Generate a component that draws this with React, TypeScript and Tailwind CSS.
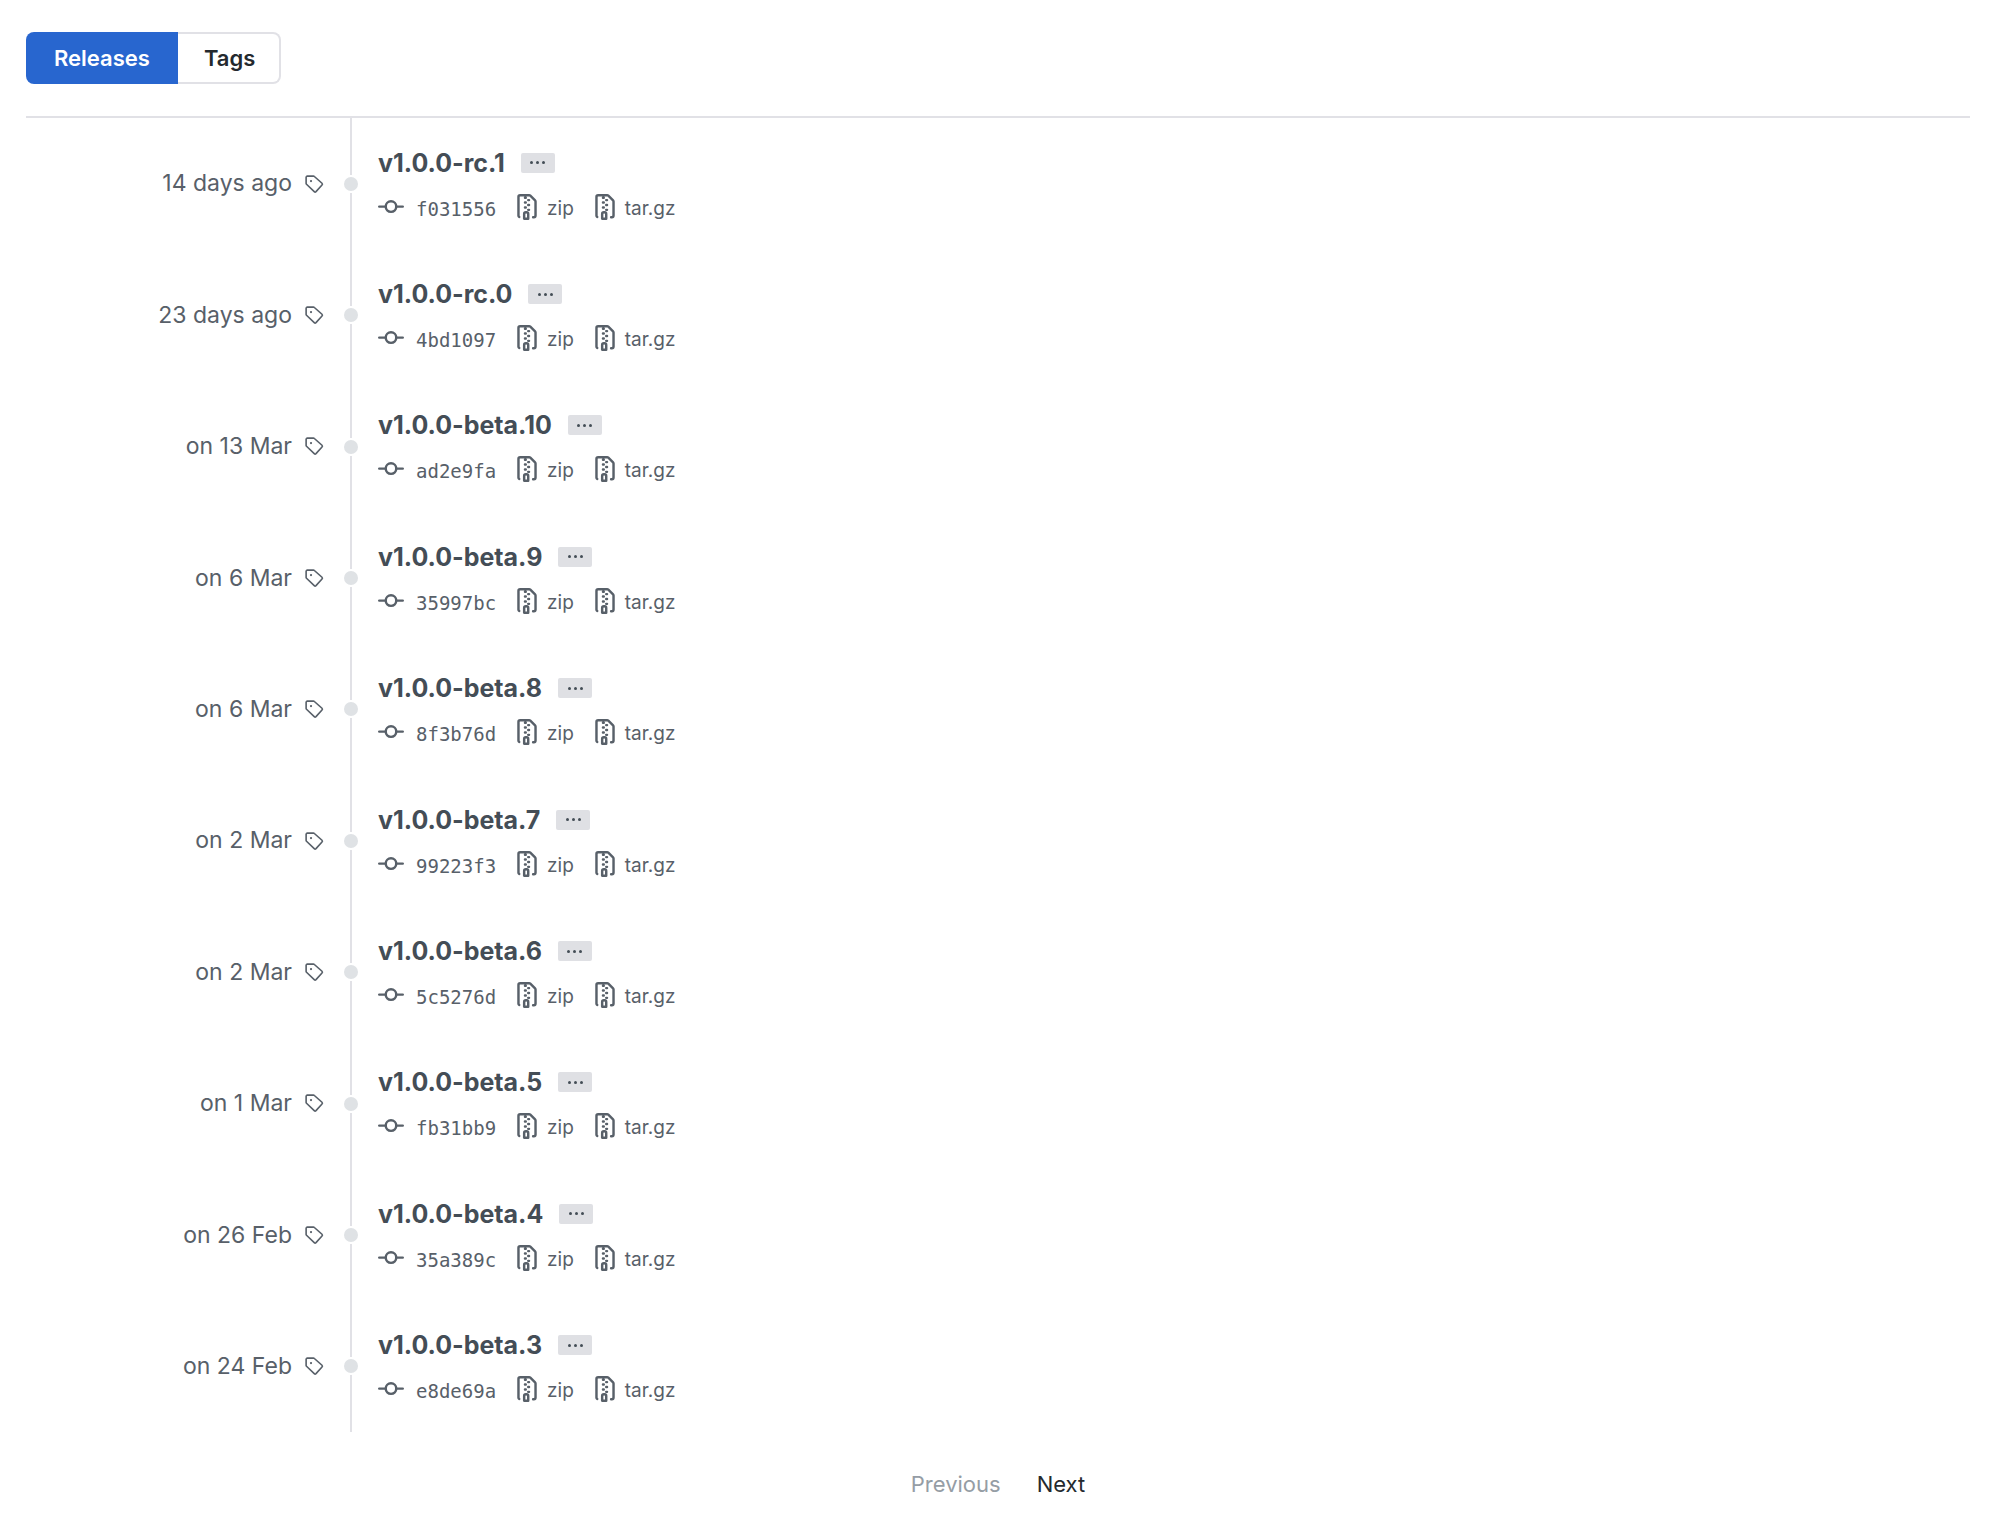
type Release = {
  version: string;
  date: string;
  commit: string;
};

const releases: Release[] = [
  { version: "v1.0.0-rc.1", date: "14 days ago", commit: "f031556" },
  { version: "v1.0.0-rc.0", date: "23 days ago", commit: "4bd1097" },
  { version: "v1.0.0-beta.10", date: "on 13 Mar", commit: "ad2e9fa" },
  { version: "v1.0.0-beta.9", date: "on 6 Mar", commit: "35997bc" },
  { version: "v1.0.0-beta.8", date: "on 6 Mar", commit: "8f3b76d" },
  { version: "v1.0.0-beta.7", date: "on 2 Mar", commit: "99223f3" },
  { version: "v1.0.0-beta.6", date: "on 2 Mar", commit: "5c5276d" },
  { version: "v1.0.0-beta.5", date: "on 1 Mar", commit: "fb31bb9" },
  { version: "v1.0.0-beta.4", date: "on 26 Feb", commit: "35a389c" },
  { version: "v1.0.0-beta.3", date: "on 24 Feb", commit: "e8de69a" },
];

const TagIcon = () => (
  <svg viewBox="0 0 16 16" fill="none" stroke="currentColor" strokeWidth="1.3" className="h-5 w-5 shrink-0" aria-hidden="true">
    <path d="M1.7 2.6a.9.9 0 0 1 .9-.9h5a1 1 0 0 1 .7.3l6.1 5.4a1 1 0 0 1 0 1.4L9.6 14.1a1 1 0 0 1-1.4 0L2 8.2a1 1 0 0 1-.3-.7z" />
    <circle cx="5.6" cy="5.6" r="0.9" fill="currentColor" stroke="none" />
  </svg>
);

const CommitIcon = () => (
  <svg viewBox="0 0 16 16" fill="none" stroke="currentColor" strokeWidth="1.5" strokeLinecap="round" className="h-[26px] w-[26px] shrink-0" aria-hidden="true">
    <circle cx="8" cy="7.75" r="3.25" />
    <path d="M.75 7.75h4M11.25 7.75h4" />
  </svg>
);

const ZipIcon = () => (
  <svg viewBox="0 0 16 16" fill="currentColor" fillRule="evenodd" className="h-[26px] w-[26px] shrink-0" aria-hidden="true">
    <path d="M3.5 1.75a.25.25 0 01.25-.25h3a.75.75 0 000 1.5h.5a.75.75 0 000-1.5h2.086a.25.25 0 01.177.073l2.914 2.914a.25.25 0 01.073.177v8.586a.25.25 0 01-.25.25h-.5a.75.75 0 000 1.5h.5A1.75 1.75 0 0014 13.25V4.664c0-.464-.184-.909-.513-1.237L10.573.513A1.75 1.75 0 009.336 0H3.75A1.75 1.75 0 002 1.75v11.5c0 .649.353 1.214.874 1.515a.75.75 0 10.752-1.298.25.25 0 01-.126-.217V1.75zM8.75 3a.75.75 0 000 1.5h.5a.75.75 0 000-1.5h-.5zM6 5.25a.75.75 0 01.75-.75h.5a.75.75 0 010 1.5h-.5A.75.75 0 016 5.25zm2 1.5A.75.75 0 018.75 6h.5a.75.75 0 010 1.5h-.5A.75.75 0 018 6.75zm-1.25.75a.75.75 0 000 1.5h.5a.75.75 0 000-1.5h-.5zM8 9.75A.75.75 0 018.75 9h.5a.75.75 0 010 1.5h-.5A.75.75 0 018 9.75zm-.75.75a1.75 1.75 0 00-1.75 1.75v3c0 .414.336.75.75.75h2.5a.75.75 0 00.75-.75v-3a1.75 1.75 0 00-1.75-1.75h-.5zM7 12.25a.25.25 0 01.25-.25h.5a.25.25 0 01.25.25v2.25H7v-2.25z" />
  </svg>
);

const ReleaseRow = ({ version, date, commit }: Release) => (
  <li className="flex">
    <div className="flex w-[298px] shrink-0 items-center justify-end gap-3 text-[23px] text-[#586069]">
      <span>{date}</span>
      <TagIcon />
    </div>

    {/* timeline */}
    <div className="ml-5 flex w-[14px] shrink-0 flex-col items-center">
      <span className="w-0.5 flex-1 bg-[#e1e1e6]" />
      <span className="my-0.5 h-[14px] w-[14px] rounded-full bg-[#dfe2e5]" />
      <span className="w-0.5 flex-1 bg-[#e1e1e6]" />
    </div>

    <div className="ml-5 flex flex-col justify-center gap-2 pt-0.5 text-[#586069]">
      <div className="flex items-center gap-4">
        <h2 className="text-[25px] leading-9 font-bold">
          <a href="#" className="text-[#444d56]">{version}</a>
        </h2>
        <button type="button" aria-label="Show details" className="flex h-5 w-[34px] items-center justify-center gap-[3px] rounded-xs bg-[#dfe0e4]">
          <span className="h-[3px] w-[3px] rounded-full bg-[#444d56]" />
          <span className="h-[3px] w-[3px] rounded-full bg-[#444d56]" />
          <span className="h-[3px] w-[3px] rounded-full bg-[#444d56]" />
        </button>
      </div>
      <div className="flex items-center gap-[18px] text-[19px] leading-8">
        <a href="#" className="flex items-center gap-3">
          <CommitIcon />
          <span className="pt-1 font-['DejaVu_Sans_Mono',monospace]">{commit}</span>
        </a>
        <a href="#" className="flex items-center gap-[7px]">
          <ZipIcon />
          <span className="pt-1">zip</span>
        </a>
        <a href="#" className="flex items-center gap-[7px]">
          <ZipIcon />
          <span className="pt-1">tar.gz</span>
        </a>
      </div>
    </div>
  </li>
);

const App = () => {
  return (
    <div className="flex min-h-screen flex-col bg-white pr-5 pl-[26px] font-['Inter',sans-serif]">
      <header className="border-b-2 border-[#e1e1e6] py-8">
        <nav className="flex h-[52px] text-[22px] font-semibold">
          <a href="#" className="flex items-center rounded-l-lg bg-[#2866cf] px-7 text-white">
            Releases
          </a>
          <a href="#" className="flex items-center rounded-r-lg border-2 border-l-0 border-[#e1e1e6] pr-6 pl-[26px] text-[#24292e]">
            Tags
          </a>
        </nav>
      </header>

      <ul className="grid flex-1 auto-rows-fr">
        {releases.map((release) => (
          <ReleaseRow key={release.version} {...release} />
        ))}
      </ul>

      <nav className="flex items-center justify-center gap-9 pt-[38px] pb-[26px] text-[22px] leading-7">
        <button type="button" disabled className="text-[#959da5]">
          Previous
        </button>
        <a href="#" className="text-[#24292e]">
          Next
        </a>
      </nav>
    </div>
  );
};

export default App;
